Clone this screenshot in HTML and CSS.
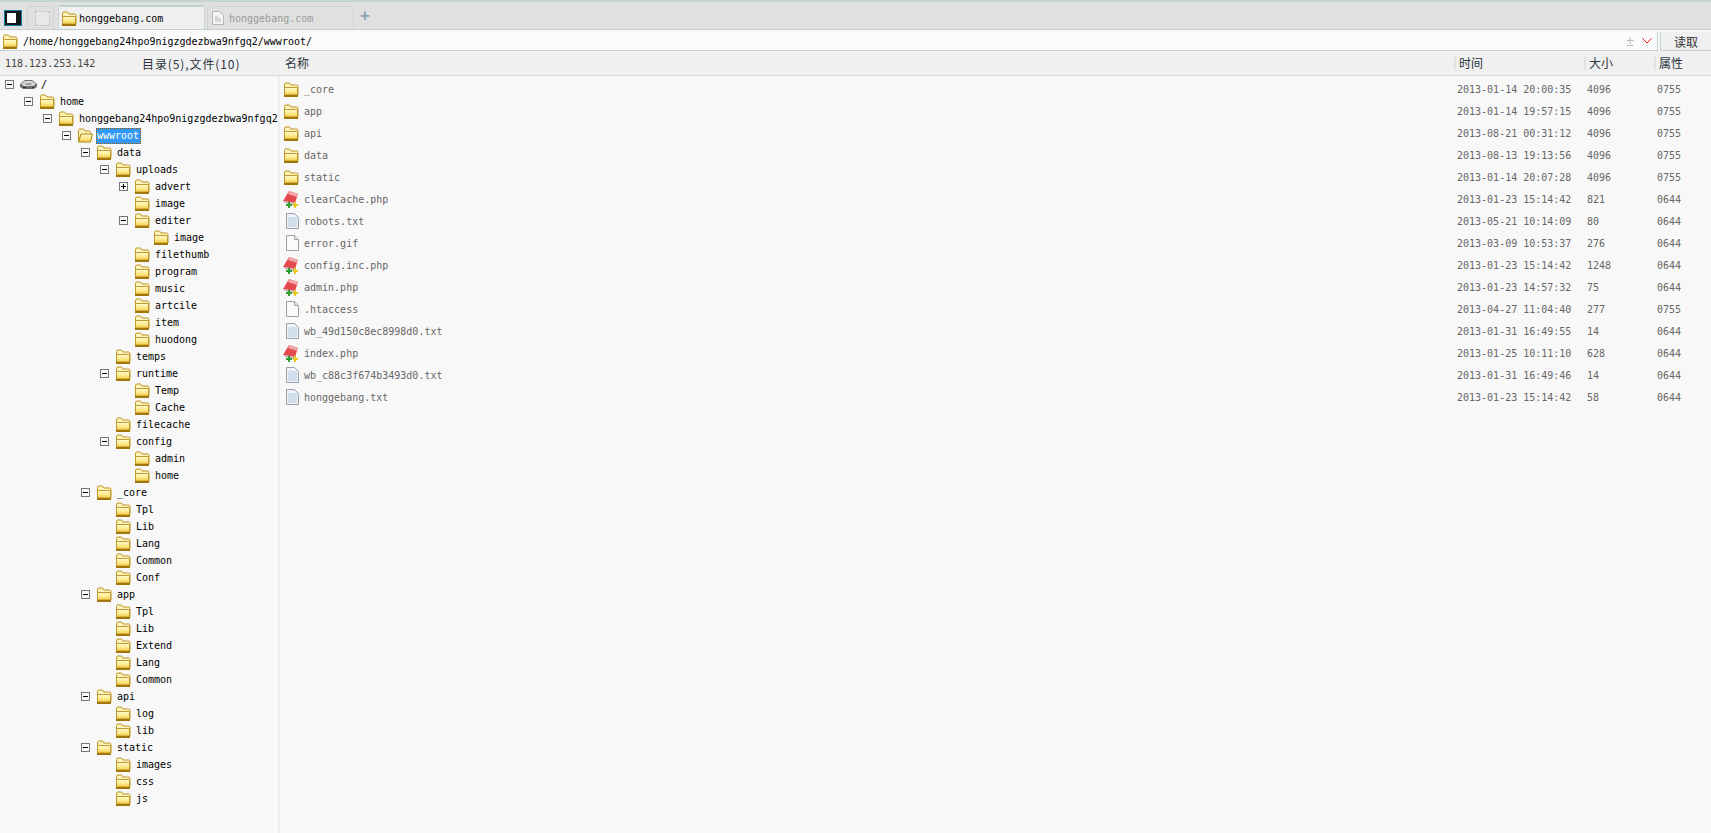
FILE: index.html
```html
<!DOCTYPE html>
<html lang="en">
<head>
    <meta charset="UTF-8">
    <meta name="viewport" content="width=device-width, initial-scale=1.0">
    <title>honggebang.com</title>
    <link rel="stylesheet" href="styles.css">
</head>
<body>
    <svg class="defs" width="0" height="0">
        <defs>
            <linearGradient id="fold-front" x1="0" y1="0" x2="0" y2="1">
                <stop offset="0" stop-color="#fffbd0"/>
                <stop offset="0.55" stop-color="#fde98a"/>
                <stop offset="1" stop-color="#f2c84a"/>
            </linearGradient>
            <symbol id="folder" viewBox="0 0 16 15">
                <path d="M1.5 13V2.5q0-1.5 1.5-1.5h3.5l1.5 2h5.5q1.5 0 1.5 1.5V13z" fill="#fdf3bd" stroke="#bd9420"/>
                <path d="M1.5 13V5.5h13V13z" fill="url(#fold-front)" stroke="#c09a2c"/>
                <path d="M1 14h14" stroke="#a07608" stroke-width="2"/>
            </symbol>
            <symbol id="folder-open" viewBox="0 0 16 15">
                <path d="M1.5 13V2.5q0-1.5 1.5-1.5h3.5l1.5 2h4.5q1 0 1 1.5v1" fill="#fdf3bd" stroke="#bd9420"/>
                <path d="M1.5 14L4 6h11.5l-2 8z" fill="url(#fold-front)" stroke="#a98414"/>
            </symbol>
            <symbol id="disk" viewBox="0 0 17 11">
                <path d="M0 5l5-4h7l5 4v3l-3 2H3L0 8z" fill="#6e6e6e"/>
                <path d="M1 5l4-3h7l4 3-3 2H4z" fill="#d6d6d6"/>
                <path d="M5 4h6l1 1-1 1H6z" fill="#a0a0a0"/>
                <path d="M3 8h3v1H3zM12 8h2v1h-2z" fill="#2e2e2e"/>
            </symbol>
            <symbol id="php" viewBox="0 0 16 17">
                <path d="M0 10L6 0l9 3-3 9z" fill="#e4494e"/>
                <path d="M6 0l9 3-1 3-9-3z" fill="#f3a6a6"/>
                <path d="M0 10l12 2-1 2-9-2z" fill="#bdbdbd"/>
                <path d="M3 13h2v-2h2v2h2v2H7v2H5v-2H3z" fill="#2f9f35"/>
                <path d="M10 13h1v-2h2v2h2v2h-2v2h-2v-2h-1z" fill="#e8c820"/>
            </symbol>
            <symbol id="doc" viewBox="0 0 13 16">
                <path d="M.5.5h8l4 4v11H.5z" fill="#fbfbfb" stroke="#a0a0a0"/>
                <path d="M8.5.5v4h4" fill="#e8e8e8" stroke="#a0a0a0"/>
            </symbol>
            <symbol id="txt" viewBox="0 0 13 16">
                <path d="M.5.5h8l4 4v11H.5z" fill="#eef3f9" stroke="#9aa0a6"/>
                <path d="M2 5h9M2 7h9M2 9h9M2 11h9M2 13h9" stroke="#b4cae0"/>
            </symbol>
        </defs>
    </svg>

    <div class="top-line"></div>

    <div class="tab-strip">
        <div class="side-toggle"><span></span></div>
        <div class="tab tab-ghost"><span class="ghost-box"></span></div>
        <div class="tab tab-active">
            <svg class="ico-folder"><use href="#folder"/></svg>
            honggebang.com
        </div>
        <div class="tab">
            <svg class="ico-tabdoc" viewBox="0 0 12 14">
                <path d="M.5.5h7l4 4v9H.5z" fill="#f4f4f4" stroke="#b5b5b5"/>
                <path d="M3 6h3M3 8h6M3 10h6" stroke="#b5b5b5"/>
            </svg>
            honggebang.com
        </div>
        <div class="tab-add">+</div>
    </div>

    <div class="address-bar">
        <div class="address">
            <svg class="ico-folder"><use href="#folder"/></svg>
            <span class="address-path">/home/honggebang24hpo9nigzgdezbwa9nfgq2/wwwroot/</span>
            <span class="address-plus">±</span>
            <svg class="address-drop" viewBox="0 0 10 6"><path d="M.5.5L5 5 9.5.5" fill="none" stroke="#e81010"/></svg>
        </div>
        <div class="read-btn">读取</div>
    </div>

    <div class="head-row">
        <div class="head-side">
            <span class="host">118.123.253.142</span>
            <span class="count">目录(5),文件(10)</span>
        </div>
        <div class="head-col col-name">名称</div>
        <div class="head-col col-time">时间</div>
        <div class="head-col col-size">大小</div>
        <div class="head-col col-attr">属性</div>
    </div>

    <div class="main">
        <div class="tree">
            <ul class="root">
                <li><div class="node"><i class="tog"></i><svg class="ico-disk"><use href="#disk"/></svg><span class="lbl">/</span></div>
                <ul>
                    <li><div class="node"><i class="tog"></i><svg class="ico-folder"><use href="#folder"/></svg><span class="lbl">home</span></div>
                    <ul>
                        <li><div class="node"><i class="tog"></i><svg class="ico-folder"><use href="#folder"/></svg><span class="lbl">honggebang24hpo9nigzgdezbwa9nfgq2</span></div>
                        <ul>
                            <li><div class="node"><i class="tog"></i><svg class="ico-folder"><use href="#folder-open"/></svg><span class="lbl selected">wwwroot</span></div>
                            <ul>
                                <li><div class="node"><i class="tog"></i><svg class="ico-folder"><use href="#folder"/></svg><span class="lbl">data</span></div>
                                <ul>
                                    <li><div class="node"><i class="tog"></i><svg class="ico-folder"><use href="#folder"/></svg><span class="lbl">uploads</span></div>
                                    <ul>
                                        <li><div class="node"><i class="tog plus"></i><svg class="ico-folder"><use href="#folder"/></svg><span class="lbl">advert</span></div></li>
                                        <li><div class="node"><i class="tog none"></i><svg class="ico-folder"><use href="#folder"/></svg><span class="lbl">image</span></div></li>
                                        <li><div class="node"><i class="tog"></i><svg class="ico-folder"><use href="#folder"/></svg><span class="lbl">editer</span></div>
                                        <ul>
                                            <li><div class="node"><i class="tog none"></i><svg class="ico-folder"><use href="#folder"/></svg><span class="lbl">image</span></div></li>
                                        </ul></li>
                                        <li><div class="node"><i class="tog none"></i><svg class="ico-folder"><use href="#folder"/></svg><span class="lbl">filethumb</span></div></li>
                                        <li><div class="node"><i class="tog none"></i><svg class="ico-folder"><use href="#folder"/></svg><span class="lbl">program</span></div></li>
                                        <li><div class="node"><i class="tog none"></i><svg class="ico-folder"><use href="#folder"/></svg><span class="lbl">music</span></div></li>
                                        <li><div class="node"><i class="tog none"></i><svg class="ico-folder"><use href="#folder"/></svg><span class="lbl">artcile</span></div></li>
                                        <li><div class="node"><i class="tog none"></i><svg class="ico-folder"><use href="#folder"/></svg><span class="lbl">item</span></div></li>
                                        <li><div class="node"><i class="tog none"></i><svg class="ico-folder"><use href="#folder"/></svg><span class="lbl">huodong</span></div></li>
                                    </ul></li>
                                    <li><div class="node"><i class="tog none"></i><svg class="ico-folder"><use href="#folder"/></svg><span class="lbl">temps</span></div></li>
                                    <li><div class="node"><i class="tog"></i><svg class="ico-folder"><use href="#folder"/></svg><span class="lbl">runtime</span></div>
                                    <ul>
                                        <li><div class="node"><i class="tog none"></i><svg class="ico-folder"><use href="#folder"/></svg><span class="lbl">Temp</span></div></li>
                                        <li><div class="node"><i class="tog none"></i><svg class="ico-folder"><use href="#folder"/></svg><span class="lbl">Cache</span></div></li>
                                    </ul></li>
                                    <li><div class="node"><i class="tog none"></i><svg class="ico-folder"><use href="#folder"/></svg><span class="lbl">filecache</span></div></li>
                                    <li><div class="node"><i class="tog"></i><svg class="ico-folder"><use href="#folder"/></svg><span class="lbl">config</span></div>
                                    <ul>
                                        <li><div class="node"><i class="tog none"></i><svg class="ico-folder"><use href="#folder"/></svg><span class="lbl">admin</span></div></li>
                                        <li><div class="node"><i class="tog none"></i><svg class="ico-folder"><use href="#folder"/></svg><span class="lbl">home</span></div></li>
                                    </ul></li>
                                </ul></li>
                                <li><div class="node"><i class="tog"></i><svg class="ico-folder"><use href="#folder"/></svg><span class="lbl">_core</span></div>
                                <ul>
                                    <li><div class="node"><i class="tog none"></i><svg class="ico-folder"><use href="#folder"/></svg><span class="lbl">Tpl</span></div></li>
                                    <li><div class="node"><i class="tog none"></i><svg class="ico-folder"><use href="#folder"/></svg><span class="lbl">Lib</span></div></li>
                                    <li><div class="node"><i class="tog none"></i><svg class="ico-folder"><use href="#folder"/></svg><span class="lbl">Lang</span></div></li>
                                    <li><div class="node"><i class="tog none"></i><svg class="ico-folder"><use href="#folder"/></svg><span class="lbl">Common</span></div></li>
                                    <li><div class="node"><i class="tog none"></i><svg class="ico-folder"><use href="#folder"/></svg><span class="lbl">Conf</span></div></li>
                                </ul></li>
                                <li><div class="node"><i class="tog"></i><svg class="ico-folder"><use href="#folder"/></svg><span class="lbl">app</span></div>
                                <ul>
                                    <li><div class="node"><i class="tog none"></i><svg class="ico-folder"><use href="#folder"/></svg><span class="lbl">Tpl</span></div></li>
                                    <li><div class="node"><i class="tog none"></i><svg class="ico-folder"><use href="#folder"/></svg><span class="lbl">Lib</span></div></li>
                                    <li><div class="node"><i class="tog none"></i><svg class="ico-folder"><use href="#folder"/></svg><span class="lbl">Extend</span></div></li>
                                    <li><div class="node"><i class="tog none"></i><svg class="ico-folder"><use href="#folder"/></svg><span class="lbl">Lang</span></div></li>
                                    <li><div class="node"><i class="tog none"></i><svg class="ico-folder"><use href="#folder"/></svg><span class="lbl">Common</span></div></li>
                                </ul></li>
                                <li><div class="node"><i class="tog"></i><svg class="ico-folder"><use href="#folder"/></svg><span class="lbl">api</span></div>
                                <ul>
                                    <li><div class="node"><i class="tog none"></i><svg class="ico-folder"><use href="#folder"/></svg><span class="lbl">log</span></div></li>
                                    <li><div class="node"><i class="tog none"></i><svg class="ico-folder"><use href="#folder"/></svg><span class="lbl">lib</span></div></li>
                                </ul></li>
                                <li><div class="node"><i class="tog"></i><svg class="ico-folder"><use href="#folder"/></svg><span class="lbl">static</span></div>
                                <ul>
                                    <li><div class="node"><i class="tog none"></i><svg class="ico-folder"><use href="#folder"/></svg><span class="lbl">images</span></div></li>
                                    <li><div class="node"><i class="tog none"></i><svg class="ico-folder"><use href="#folder"/></svg><span class="lbl">css</span></div></li>
                                    <li><div class="node"><i class="tog none"></i><svg class="ico-folder"><use href="#folder"/></svg><span class="lbl">js</span></div></li>
                                </ul></li>
                            </ul></li>
                        </ul></li>
                    </ul></li>
                </ul></li>
            </ul>
        </div>

        <div class="files">
            <div class="file"><div class="col-name"><svg class="ico-file"><use href="#folder"/></svg>_core</div><div class="col-time">2013-01-14 20:00:35</div><div class="col-size">4096</div><div class="col-attr">0755</div></div>
            <div class="file"><div class="col-name"><svg class="ico-file"><use href="#folder"/></svg>app</div><div class="col-time">2013-01-14 19:57:15</div><div class="col-size">4096</div><div class="col-attr">0755</div></div>
            <div class="file"><div class="col-name"><svg class="ico-file"><use href="#folder"/></svg>api</div><div class="col-time">2013-08-21 00:31:12</div><div class="col-size">4096</div><div class="col-attr">0755</div></div>
            <div class="file"><div class="col-name"><svg class="ico-file"><use href="#folder"/></svg>data</div><div class="col-time">2013-08-13 19:13:56</div><div class="col-size">4096</div><div class="col-attr">0755</div></div>
            <div class="file"><div class="col-name"><svg class="ico-file"><use href="#folder"/></svg>static</div><div class="col-time">2013-01-14 20:07:28</div><div class="col-size">4096</div><div class="col-attr">0755</div></div>
            <div class="file"><div class="col-name"><svg class="ico-php"><use href="#php"/></svg>clearCache.php</div><div class="col-time">2013-01-23 15:14:42</div><div class="col-size">821</div><div class="col-attr">0644</div></div>
            <div class="file"><div class="col-name"><svg class="ico-doc"><use href="#txt"/></svg>robots.txt</div><div class="col-time">2013-05-21 10:14:09</div><div class="col-size">80</div><div class="col-attr">0644</div></div>
            <div class="file"><div class="col-name"><svg class="ico-doc"><use href="#doc"/></svg>error.gif</div><div class="col-time">2013-03-09 10:53:37</div><div class="col-size">276</div><div class="col-attr">0644</div></div>
            <div class="file"><div class="col-name"><svg class="ico-php"><use href="#php"/></svg>config.inc.php</div><div class="col-time">2013-01-23 15:14:42</div><div class="col-size">1248</div><div class="col-attr">0644</div></div>
            <div class="file"><div class="col-name"><svg class="ico-php"><use href="#php"/></svg>admin.php</div><div class="col-time">2013-01-23 14:57:32</div><div class="col-size">75</div><div class="col-attr">0644</div></div>
            <div class="file"><div class="col-name"><svg class="ico-doc"><use href="#doc"/></svg>.htaccess</div><div class="col-time">2013-04-27 11:04:40</div><div class="col-size">277</div><div class="col-attr">0755</div></div>
            <div class="file"><div class="col-name"><svg class="ico-doc"><use href="#txt"/></svg>wb_49d150c8ec8998d0.txt</div><div class="col-time">2013-01-31 16:49:55</div><div class="col-size">14</div><div class="col-attr">0644</div></div>
            <div class="file"><div class="col-name"><svg class="ico-php"><use href="#php"/></svg>index.php</div><div class="col-time">2013-01-25 10:11:10</div><div class="col-size">628</div><div class="col-attr">0644</div></div>
            <div class="file"><div class="col-name"><svg class="ico-doc"><use href="#txt"/></svg>wb_c88c3f674b3493d0.txt</div><div class="col-time">2013-01-31 16:49:46</div><div class="col-size">14</div><div class="col-attr">0644</div></div>
            <div class="file"><div class="col-name"><svg class="ico-doc"><use href="#txt"/></svg>honggebang.txt</div><div class="col-time">2013-01-23 15:14:42</div><div class="col-size">58</div><div class="col-attr">0644</div></div>
        </div>
    </div>
</body>
</html>
```

FILE: styles.css
```css
html, body {
    height: 100%;
}
body {
    margin: 0;
    display: flex;
    flex-direction: column;
    overflow: hidden;
    background-color: #f8f8f8;
    font-family: "DejaVu Sans Mono", "Noto Sans CJK SC", monospace;
    font-size: 10px;
    color: #000;
}
.defs {
    position: absolute;
}
.top-line {
    height: 2px;
    background-color: #c6d3d3;
}

/* tabs */
.tab-strip {
    height: 27px;
    display: flex;
    align-items: flex-end;
    background-color: #e0e0e0;
    border-bottom: 1px solid #c5d1d1;
}
.side-toggle {
    width: 18px;
    height: 16px;
    margin: 0 5px 3px 4px;
    box-sizing: border-box;
    border: 1px solid #0a7f9c;
    background-color: #151515;
    padding: 2px 5px 2px 2px;
}
.side-toggle span {
    display: block;
    height: 100%;
    background-color: #fff;
}
.tab {
    width: 147px;
    height: 23px;
    box-sizing: border-box;
    margin-right: 2px;
    padding-left: 4px;
    display: flex;
    align-items: center;
    color: #999;
    border: 1px solid #ccd5d5;
    border-bottom: none;
    border-radius: 4px 4px 0 0;
}
.tab-ghost {
    width: 27px;
    margin-right: 4px;
    padding-left: 7px;
}
.ghost-box {
    display: block;
    width: 13px;
    height: 13px;
    border: 1px dashed #c4c4c4;
    background-color: #e8e8e8;
}
.tab-active {
    height: 24px;
    color: #000;
    background-color: #f0f0f0;
    border-top: 2px solid #bcd0d0;
    border-radius: 2px 2px 0 0;
    padding-left: 2px;
}
.tab-active .ico-folder {
    margin-right: 2px;
}
.ico-tabdoc {
    width: 12px;
    height: 14px;
    margin-right: 5px;
}
.tab-add {
    margin: 0 0 3px 3px;
    width: 12px;
    font-family: "Liberation Sans", sans-serif;
    font-size: 17px;
    font-weight: bold;
    line-height: 20px;
    text-align: center;
    color: #8ba4b5;
}

/* address */
.address-bar {
    height: 19px;
    display: flex;
    gap: 2px;
    margin-top: 2px;
}
.address {
    flex: 1;
    display: flex;
    align-items: center;
    padding-left: 2px;
    background-color: #fbfbfb;
    border: 1px solid #c5d1d1;
    border-width: 0 1px 1px 0;
}
.address-path {
    flex: 1;
}
.address-plus {
    margin-right: 8px;
    font-family: "Liberation Sans", sans-serif;
    font-size: 14px;
    color: #bbb;
}
.address-drop {
    width: 10px;
    height: 6px;
    margin-right: 5px;
}
.read-btn {
    width: 50px;
    display: flex;
    align-items: center;
    justify-content: center;
    background-color: #f0f0f0;
    border-left: 1px solid #c5d1d1;
    border-bottom: 1px solid #c5d1d1;
    font-size: 12px;
    color: #333;
}

/* column heads */
.head-row {
    height: 24px;
    display: flex;
    align-items: center;
    background-color: #f0f0f0;
    border-bottom: 1px solid #d5dcdc;
    font-size: 12px;
    color: #2b3540;
}
.head-side {
    width: 280px;
    display: flex;
    font-size: 10px;
    color: #444;
    align-items: center;
}
.host {
    width: 142px;
    padding-left: 5px;
    box-sizing: border-box;
}
.count {
    font-size: 12px;
    letter-spacing: 0.9px;
    color: #2b3540;
    font-family: "Noto Sans CJK SC", sans-serif;
}
.head-col {
    height: 14px;
    line-height: 14px;
    border-left: 2px solid #e3e3e3;
    box-sizing: border-box;
    padding-left: 3px;
    font-family: "Noto Sans CJK SC", sans-serif;
}
.head-col.col-name {
    border-left: none;
    padding-left: 5px;
}

/* shared columns */
.col-name {
    flex: 1;
    min-width: 0;
    padding-left: 3px;
}
.col-time {
    width: 130px;
}
.col-size {
    width: 70px;
}
.col-attr {
    width: 57px;
}

/* main panes */
.main {
    flex: 1;
    display: flex;
    min-height: 0;
}
.tree {
    width: 278px;
    border-right: 2px solid #eeeeee;
    overflow: hidden;
}
.tree ul {
    list-style: none;
    margin: 0;
    padding: 0 0 0 19px;
}
.tree ul.root {
    padding-left: 5px;
}
.node {
    height: 17px;
    display: flex;
    align-items: center;
    white-space: nowrap;
}
.tog {
    display: block;
    position: relative;
    flex: none;
    width: 9px;
    height: 9px;
    box-sizing: border-box;
    border: 1px solid #777;
    background-color: #fafafa;
    margin-right: 6px;
}
.tog::before {
    content: "";
    position: absolute;
    left: 1px;
    right: 1px;
    top: 3px;
    height: 1px;
    background-color: #000;
}
.tog.plus::after {
    content: "";
    position: absolute;
    top: 1px;
    bottom: 1px;
    left: 3px;
    width: 1px;
    background-color: #000;
}
.tog.none {
    visibility: hidden;
}
.ico-folder {
    flex: none;
    width: 16px;
    height: 15px;
    margin-right: 5px;
}
.ico-disk {
    flex: none;
    width: 17px;
    height: 11px;
    margin-right: 4px;
}
.lbl {
    display: block;
    height: 16px;
    line-height: 16px;
}
.selected {
    margin-left: -2px;
    padding: 0 2px 0 1px;
    box-sizing: border-box;
    color: #fff;
    background-color: #3399ff;
    outline: 1px dotted #a85a00;
    outline-offset: -1px;
}
.files {
    flex: 1;
    padding-top: 2px;
    color: #666;
}
.file {
    height: 22px;
    display: flex;
    align-items: center;
    white-space: nowrap;
}
.file .col-name {
    display: flex;
    align-items: center;
}
.file .col-time,
.file .col-size,
.file .col-attr {
    padding-left: 3px;
    box-sizing: border-box;
}
.ico-file {
    flex: none;
    width: 16px;
    height: 15px;
    margin-right: 5px;
}
.ico-php {
    flex: none;
    width: 16px;
    height: 17px;
    margin-right: 5px;
}
.ico-doc {
    flex: none;
    width: 13px;
    height: 16px;
    margin: 0 5px 0 3px;
}
```
